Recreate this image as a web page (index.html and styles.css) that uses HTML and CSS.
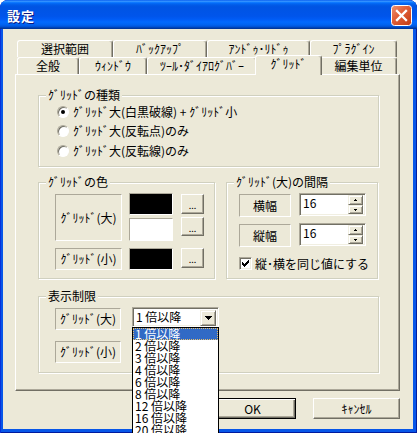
FILE: index.html
```html
<!DOCTYPE html>
<html lang="ja">
<head>
<meta charset="utf-8">
<title>設定</title>
<link rel="stylesheet" href="styles.css">
</head>
<body>
<div class="window">
  <div class="titlebar">
    <span class="title">設定</span>
    <span class="close-btn">
      <svg width="21" height="21" viewBox="0 0 21 21">
        <defs>
          <linearGradient id="cg" x1="0" y1="0" x2="1" y2="1">
            <stop offset="0" stop-color="#EC9474"/>
            <stop offset="0.4" stop-color="#E2613A"/>
            <stop offset="1" stop-color="#C23A12"/>
          </linearGradient>
        </defs>
        <rect x="0.5" y="0.5" width="20" height="20" rx="3" fill="url(#cg)" stroke="#fff"/>
        <path d="M6 6 L15 15 M15 6 L6 15" stroke="#fff" stroke-width="2.3" stroke-linecap="square"/>
      </svg>
    </span>
  </div>
  <div class="client">
    <div class="tabs">
      <div class="tabrow">
        <div class="tab w-sel">選択範囲</div>
        <div class="tab w-bak">ﾊﾞｯｸｱｯﾌﾟ</div>
        <div class="tab w-undo">ｱﾝﾄﾞｩ･ﾘﾄﾞｩ</div>
        <div class="tab w-plug">ﾌﾟﾗｸﾞｲﾝ</div>
      </div>
      <div class="tabrow">
        <div class="tab w-gen">全般</div>
        <div class="tab w-win">ｳｨﾝﾄﾞｳ</div>
        <div class="tab w-tool">ﾂｰﾙ･ﾀﾞｲｱﾛｸﾞﾊﾞｰ</div>
        <div class="tab w-grid active">ｸﾞﾘｯﾄﾞ</div>
        <div class="tab w-unit">編集単位</div>
      </div>
    </div>
    <div class="panel">
      <div class="group g-kind">
        <div class="gtitle">ｸﾞﾘｯﾄﾞの種類</div>
        <div class="radios">
          <div class="radio-row"><span class="radio checked"></span><span>ｸﾞﾘｯﾄﾞ大(白黒破線) + ｸﾞﾘｯﾄﾞ小</span></div>
          <div class="radio-row"><span class="radio"></span><span>ｸﾞﾘｯﾄﾞ大(反転点)のみ</span></div>
          <div class="radio-row"><span class="radio"></span><span>ｸﾞﾘｯﾄﾞ大(反転線)のみ</span></div>
        </div>
      </div>
      <div class="group-row">
        <div class="group g-color">
          <div class="gtitle">ｸﾞﾘｯﾄﾞの色</div>
          <div class="crow first">
            <div class="slabel tall">ｸﾞﾘｯﾄﾞ(大)</div>
            <div class="swatches">
              <div class="swatch black"></div>
              <div class="swatch white"></div>
            </div>
            <div class="dotbtns">
              <div class="btn dots">...</div>
              <div class="btn dots short">...</div>
            </div>
          </div>
          <div class="crow second">
            <div class="slabel">ｸﾞﾘｯﾄﾞ(小)</div>
            <div class="swatch black single"></div>
            <div class="btn dots single">...</div>
          </div>
        </div>
        <div class="group g-space">
          <div class="gtitle">ｸﾞﾘｯﾄﾞ(大)の間隔</div>
          <div class="srow first">
            <div class="slabel wlabel">横幅</div>
            <div class="field spin">
              <span class="val">16</span>
              <div class="spinbtns">
                <div class="sbtn"><svg width="3" height="2" viewBox="0 0 3 2"><path d="M1 0h1v1h1v1H0V1h1z"/></svg></div>
                <div class="sbtn"><svg width="3" height="2" viewBox="0 0 3 2"><path d="M0 0h3v1H2v1H1V1H0z"/></svg></div>
              </div>
            </div>
          </div>
          <div class="srow second">
            <div class="slabel wlabel">縦幅</div>
            <div class="field spin">
              <span class="val">16</span>
              <div class="spinbtns">
                <div class="sbtn"><svg width="3" height="2" viewBox="0 0 3 2"><path d="M1 0h1v1h1v1H0V1h1z"/></svg></div>
                <div class="sbtn"><svg width="3" height="2" viewBox="0 0 3 2"><path d="M0 0h3v1H2v1H1V1H0z"/></svg></div>
              </div>
            </div>
          </div>
          <div class="checkrow">
            <span class="checkbox"><svg width="7" height="7" viewBox="0 0 7 7"><path d="M0 2h1v1h1v1h1V3h1V2h1V1h1V0h1v3H6v1H5v1H4v1H3v1H2V6H1V5H0z"/></svg></span>
            <span>縦･横を同じ値にする</span>
          </div>
        </div>
      </div>
      <div class="group g-limit">
        <div class="gtitle">表示制限</div>
        <div class="lrow first">
          <div class="slabel">ｸﾞﾘｯﾄﾞ(大)</div>
          <div class="field combo">
            <span class="val">1 倍以降</span>
            <div class="cbtn"><svg width="7" height="4" viewBox="0 0 7 4"><path d="M0 0h7v1H6v1H5v1H4v1H3V3H2V2H1V1H0z"/></svg></div>
            <div class="combo-list">
              <div class="item sel">1 倍以降</div>
              <div class="item">2 倍以降</div>
              <div class="item">3 倍以降</div>
              <div class="item">4 倍以降</div>
              <div class="item">6 倍以降</div>
              <div class="item">8 倍以降</div>
              <div class="item">12 倍以降</div>
              <div class="item">16 倍以降</div>
              <div class="item">20 倍以降</div>
            </div>
          </div>
        </div>
        <div class="lrow second">
          <div class="slabel">ｸﾞﾘｯﾄﾞ(小)</div>
        </div>
      </div>
    </div>
    <div class="buttons">
      <div class="btn push default">OK</div>
      <div class="btn push">ｷｬﾝｾﾙ</div>
    </div>
  </div>
</div>
</body>
</html>
```

FILE: styles.css
```css
* { box-sizing: border-box; }
html, body { margin: 0; padding: 0; }
body {
  width: 417px;
  height: 433px;
  overflow: hidden;
  background: #fff;
  font-family: "Noto Sans CJK JP", "Noto Sans", sans-serif;
  font-size: 12px;
  color: #000;
}

.window {
  width: 417px;
  height: 433px;
  display: flex;
  flex-direction: column;
  background: #0756E8;
  border-radius: 8px 8px 0 0;
  overflow: hidden;
  position: relative;
  box-shadow: inset 1px 0 0 #0831D9, inset -1px 0 0 #001EA0, inset 0 -1px 0 #001A9E;
}

.titlebar {
  height: 29px;
  flex: none;
  display: flex;
  justify-content: space-between;
  align-items: flex-start;
  padding: 5px 5px 0 7px;
  border-radius: 7px 7px 0 0;
  background: linear-gradient(to bottom, #0058EE 0%, #3A93FF 4%, #288EFF 6%, #127DFF 8%, #036FFC 10%, #0262EE 14%, #0057E5 20%, #0054E3 24%, #0055EB 56%, #005BF5 66%, #026AFE 76%, #0062EF 86%, #0052D6 92%, #0040AB 96%, #003092 100%);
}
.title {
  color: #fff;
  font-weight: bold;
  font-size: 13px;
  line-height: 14px;
  margin-top: 4px;
  letter-spacing: 1px;
  text-shadow: 1px 1px 0 #0A1883;
}
.close-btn { width: 21px; height: 21px; display: block; }
.close-btn svg { display: block; }

.client {
  flex: 1;
  margin: 0 4px 4px 3px;
  background: #ECE9D8;
  padding: 11px 0 0 12px;
  display: flex;
  flex-direction: column;
}

/* tabs */
.tabs { margin-left: 2px; display: flex; flex-direction: column; width: 380px; }
.tabrow { display: flex; height: 17px; }
.tab {
  height: 17px;
  border: 1px solid #fff;
  border-bottom: none;
  border-right-color: #716F64;
  box-shadow: inset -1px 0 0 #ACA899;
  border-radius: 3px 3px 0 0;
  text-align: center;
  line-height: 16px;
  background: #ECE9D8;
  white-space: nowrap;
}
.w-sel { width: 96px; }
.w-bak { width: 94px; }
.w-undo { width: 103px; }
.w-plug { width: 87px; }
.w-gen { width: 62px; }
.w-win { width: 68px; }
.w-tool { width: 110px; }
.w-grid { width: 63px; }
.w-unit { width: 77px; }
.tab.active {
  position: relative;
  z-index: 2;
  width: 67px;
  height: 20px;
  margin: -2px -2px -1px;
  line-height: 15px;
}

/* panel */
.panel {
  width: 385px;
  height: 317px;
  border: 1px solid;
  border-color: #fff #716F64 #716F64 #fff;
  box-shadow: inset -1px -1px 0 #ACA899;
  padding: 20px 0 0 22px;
  display: flex;
  flex-direction: column;
  flex: none;
}

.group {
  border: 1px solid #D0D0BF;
  box-shadow: 1px 1px 0 #fff, inset 1px 1px 0 #fff;
  display: flex;
  flex-direction: column;
  flex: none;
}
.gtitle {
  align-self: flex-start;
  height: 12px;
  line-height: 12px;
  margin: -7px 0 0 7px;
  padding: 0 2px;
  background: #ECE9D8;
  white-space: nowrap;
}

.g-kind { width: 341px; height: 72px; }
.radios { margin: 1px 0 0 18px; display: flex; flex-direction: column; }
.radio-row { display: flex; align-items: center; height: 19.5px; gap: 4px; line-height: 14px; white-space: nowrap; }
.radio {
  position: relative;
  flex: none;
  width: 12px;
  height: 12px;
  border-radius: 50%;
  background: #fff;
  border: 1px solid;
  border-color: #ACA899 #fff #fff #ACA899;
  box-shadow: inset 1px 1px 0 #716F64;
}
.radio.checked::after {
  content: "";
  position: absolute;
  left: 3px;
  top: 3px;
  width: 4px;
  height: 4px;
  border-radius: 50%;
  background: #000;
}

.group-row { display: flex; gap: 11px; margin-top: 15px; }
.g-color { width: 177px; height: 97px; }
.g-space { width: 152px; height: 97px; }

.slabel {
  display: flex;
  align-items: center;
  justify-content: center;
  width: 66px;
  height: 22px;
  border: 1px solid;
  border-color: #ACA899 #fff #fff #ACA899;
  white-space: nowrap;
  line-height: 12px;
  flex: none;
}

.crow { display: flex; margin-left: 16px; align-items: flex-start; }
.crow.first { margin-top: 5px; }
.crow.second { margin-top: 7px; }
.crow .slabel { width: 67px; }
.crow .slabel.tall { height: 47px; margin-top: 1px; }
.swatches { display: flex; flex-direction: column; margin-left: 7px; }
.swatch {
  width: 44px;
  height: 22px;
  border: 1px solid;
  border-color: #ACA899 #fff #fff #ACA899;
  flex: none;
}
.swatch.black { background: #000; }
.swatch.white { background: #fff; height: 23px; margin-top: 3px; }
.swatch.single { margin-left: 7px; }
.dotbtns { display: flex; flex-direction: column; margin-left: 8px; }

.btn {
  display: flex;
  align-items: center;
  justify-content: center;
  background: #ECE9D8;
  border: 1px solid;
  border-color: #fff #716F64 #716F64 #fff;
  box-shadow: inset -1px -1px 0 #ACA899;
  flex: none;
  white-space: nowrap;
}
.dots {
  width: 23px;
  height: 20px;
  margin-top: 1px;
  font-size: 9px;
  line-height: 9px;
  padding-top: 3px;
  letter-spacing: 0;
}
.dots.short { height: 19px; margin-top: 3px; }
.dots.single { margin: 0 0 0 8px; }

.srow { display: flex; margin-left: 12px; align-items: flex-start; }
.srow.first { margin-top: 5px; }
.srow.second { margin-top: 6px; }
.wlabel { width: 52px; height: 23px; margin-top: 1px; }

.field {
  position: relative;
  display: flex;
  background: #fff;
  border: 1px solid;
  border-color: #ACA899 #fff #fff #ACA899;
  box-shadow: inset 1px 1px 0 #716F64, inset -1px -1px 0 #F1EFE2;
  flex: none;
}
.spin { width: 67px; height: 23px; margin-left: 8px; padding: 1px; }
.spin .val { flex: 1; padding-left: 2px; line-height: 15px; }
.spinbtns { display: flex; flex-direction: column; width: 15px; margin-right: 1px; }
.sbtn {
  height: 10px;
  display: flex;
  align-items: center;
  justify-content: center;
  background: #ECE9D8;
  border: 1px solid;
  border-color: #F1EFE2 #716F64 #716F64 #F1EFE2;
  box-shadow: inset 1px 1px 0 #fff, inset -1px -1px 0 #ACA899;
}
.sbtn + .sbtn { height: 9px; }
.sbtn svg, .cbtn svg, .checkbox svg { display: block; }

.checkrow { display: flex; align-items: center; margin: 10px 0 0 12px; gap: 3px; line-height: 13px; white-space: nowrap; }
.checkbox {
  width: 13px;
  height: 13px;
  display: flex;
  align-items: center;
  justify-content: center;
  background: #fff;
  border: 1px solid;
  border-color: #ACA899 #fff #fff #ACA899;
  box-shadow: inset 1px 1px 0 #716F64, inset -1px -1px 0 #F1EFE2;
  flex: none;
}

.g-limit { width: 341px; height: 77px; margin-top: 17px; }
.lrow { display: flex; margin-left: 16px; align-items: flex-start; }
.lrow.first { margin-top: 5px; }
.lrow.second { margin-top: 10px; }
.lrow .slabel { margin-top: 1px; }
.combo { width: 87px; height: 20px; margin-left: 11px; padding: 1px; align-items: flex-start; }
.combo .val { flex: 1; padding-left: 2px; line-height: 16px; white-space: nowrap; }
.cbtn {
  width: 16px;
  height: 16px;
  margin-top: 1px;
  margin-right: 1px;
  display: flex;
  align-items: center;
  justify-content: center;
  background: #ECE9D8;
  border: 1px solid;
  border-color: #F1EFE2 #716F64 #716F64 #F1EFE2;
  box-shadow: inset 1px 1px 0 #fff, inset -1px -1px 0 #ACA899;
}

.combo-list {
  position: absolute;
  left: -1px;
  top: 19px;
  width: 87px;
  height: 120px;
  background: #fff;
  border: 1px solid #000;
  z-index: 5;
}
.item {
  height: 12px;
  line-height: 12px;
  padding-left: 2px;
  white-space: nowrap;
}
.item.sel {
  background: #316AC5;
  color: #fff;
  outline: 1px dotted #E8C06A;
  outline-offset: -1px;
}

.buttons {
  display: flex;
  justify-content: flex-end;
  gap: 17px;
  margin-top: 7px;
  padding-right: 13px;
}
.push { width: 87px; height: 21px; line-height: 14px; }
.push.default {
  border-color: #000;
  box-shadow: inset 1px 1px 0 #fff, inset -1px -1px 0 #716F64, inset -2px -2px 0 #ACA899;
}
```
